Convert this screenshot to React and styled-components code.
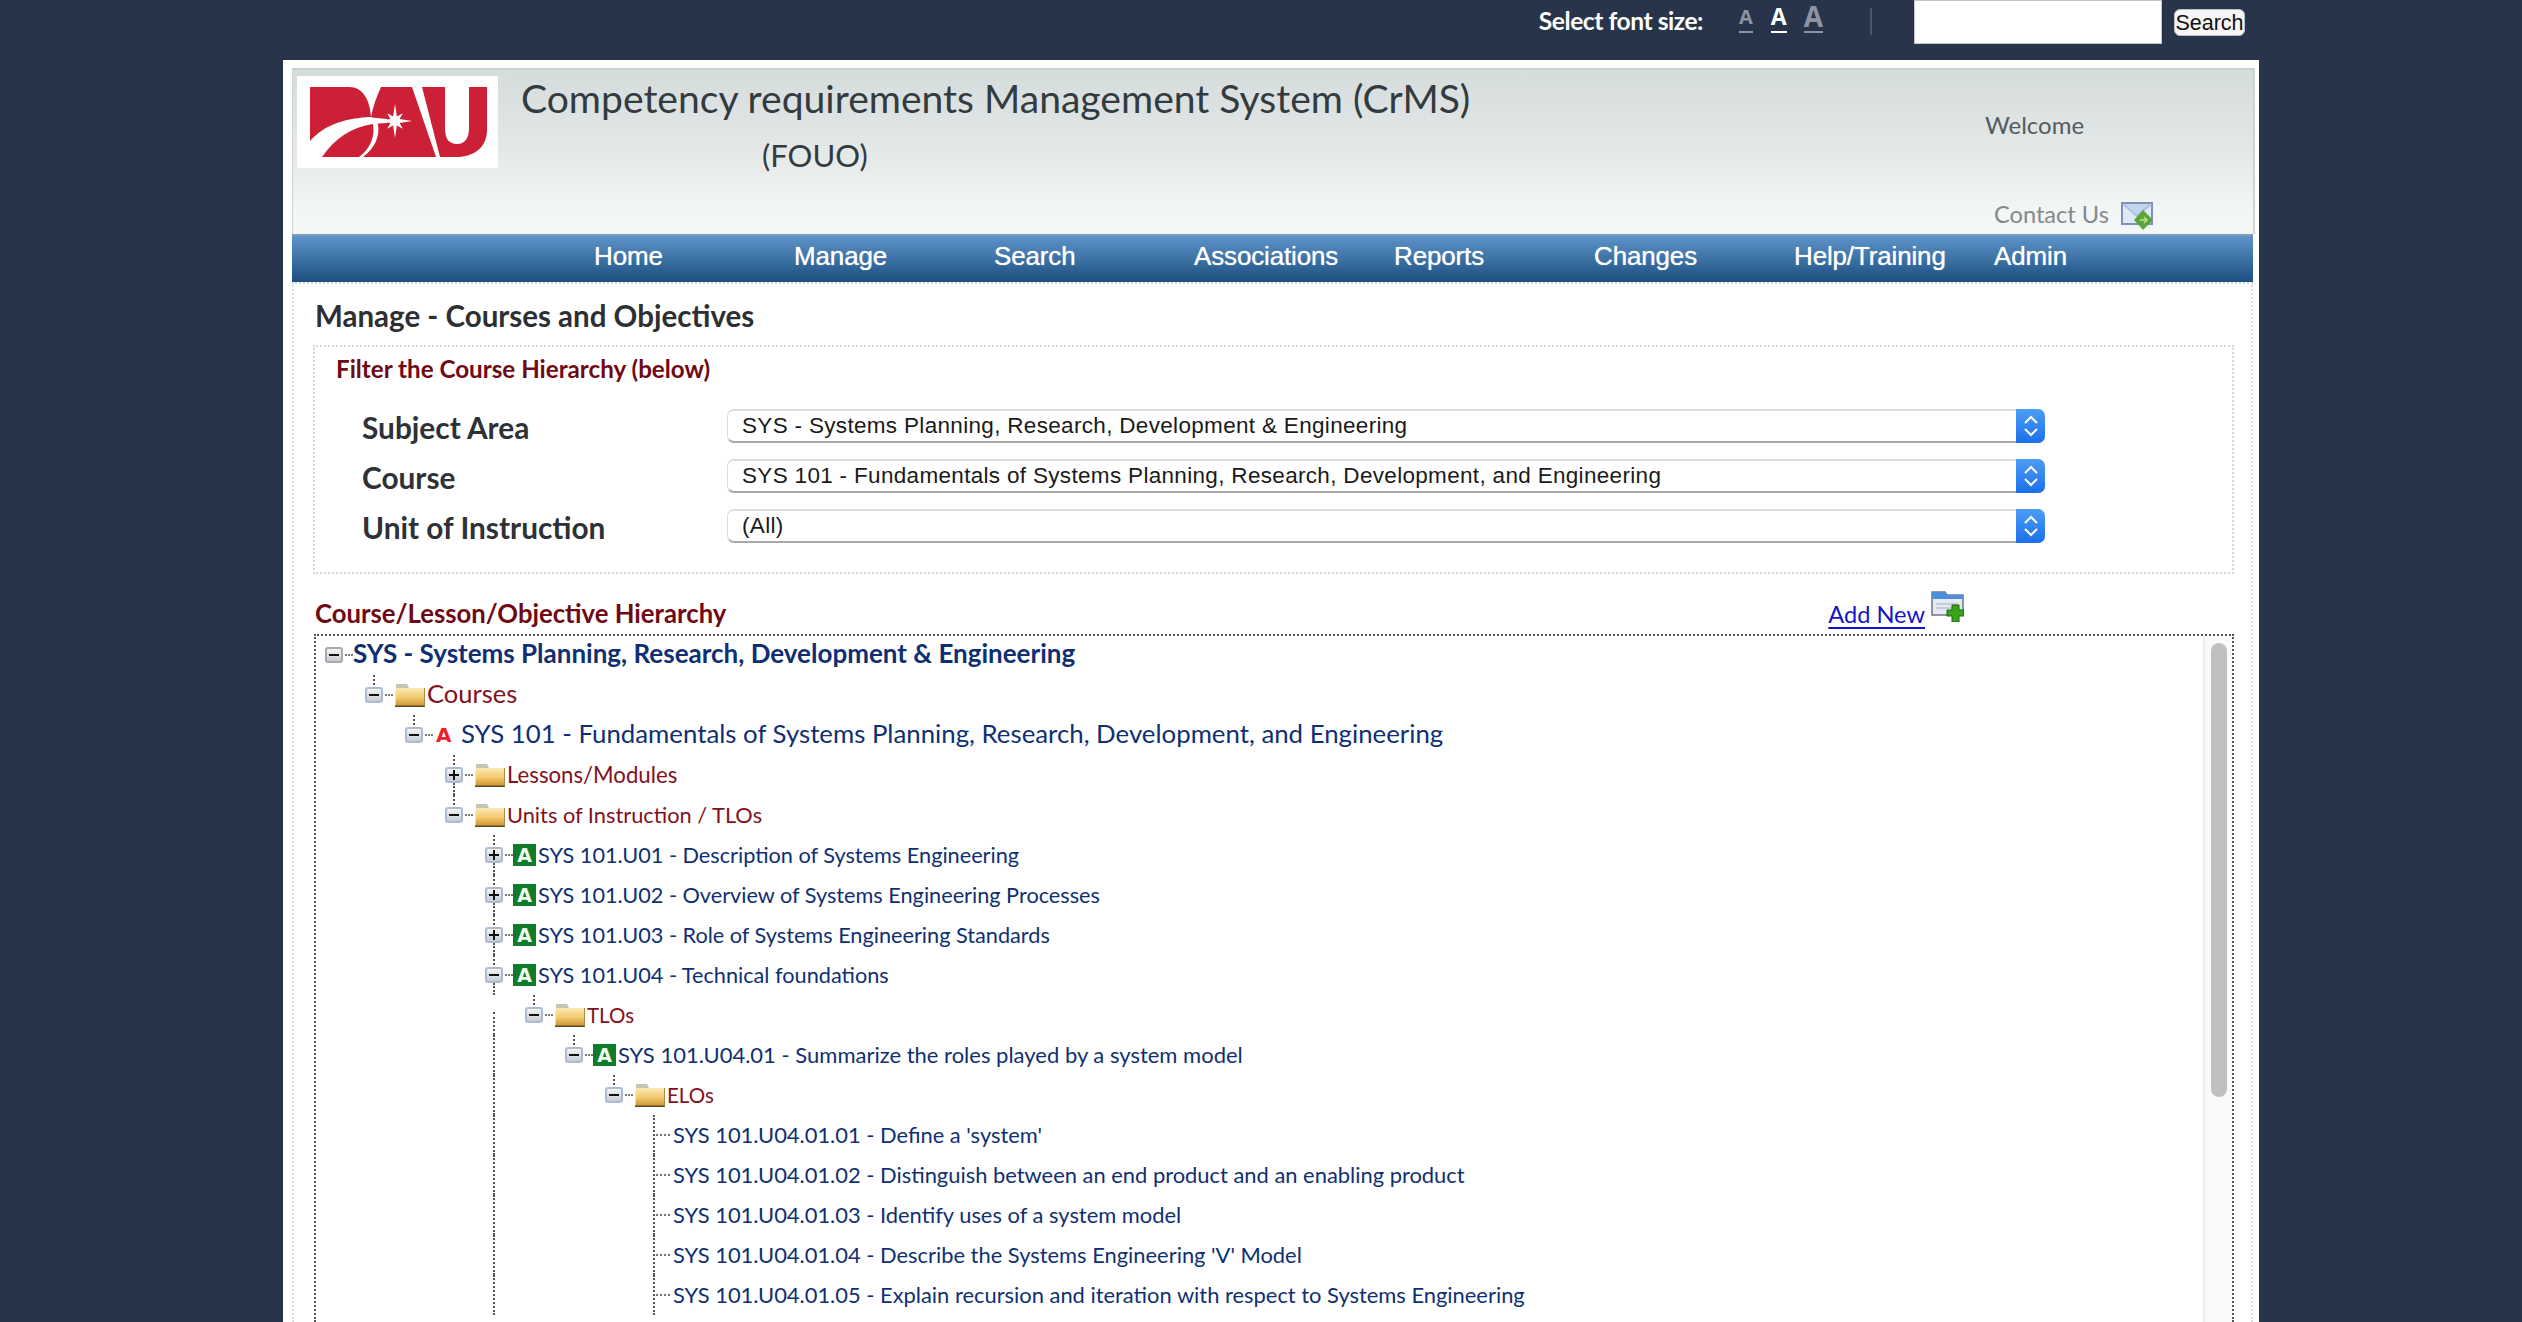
import React from 'react'
import styled, { createGlobalStyle } from 'styled-components'

const Global = createGlobalStyle`
  html, body { margin: 0; padding: 0; background: #28344a; }
  body { font-family: Lato, "Open Sans", sans-serif; }
  #root { height: 1322px; overflow: hidden; }
`

const Shell = styled.div`
  width: 2522px;
  height: 1322px;
  overflow: hidden;
  background: #28344a;
`

const TopBar = styled.div`
  height: 60px;
  display: flex;
  justify-content: flex-end;
  align-items: flex-start;
  padding-right: 277px;
  box-sizing: border-box;
`
const FontLabel = styled.span`
  color: #fff;
  font-size: 24.6px;
  font-weight: 700;
  line-height: 42px;
  margin-right: 36px;
  letter-spacing: -0.45px;
`
const SizeLink = styled.a`
  color: ${p => (p.$on ? '#fff' : '#8c94a4')};
  font-size: ${p => p.$size}px;
  font-weight: 700;
  height: 33px;
  margin-right: ${p => p.$gap}px;
  text-decoration: none;
  box-shadow: inset 0 -2px 0 ${p => (p.$on ? '#fff' : '#8c94a4')};
  display: flex;
  align-items: flex-end;
  font-family: "Open Sans", sans-serif;
  line-height: 33px;
`
const Divider = styled.span`
  width: 2px;
  height: 27px;
  margin: 8px 42px 0 47px;
  background: #4a556b;
`
const SearchInput = styled.input`
  width: 248px;
  height: 44px;
  box-sizing: border-box;
  border: 1px solid #c4c4c8;
  background: #fff;
  margin: 0 12px 0 0;
  padding: 0;
`
const SearchButton = styled.button`
  width: 71px;
  height: 27px;
  margin-top: 9px;
  padding: 0;
  border: 1px solid #b9bcc6;
  border-radius: 6px;
  background: #f6f6f6;
  color: #111;
  font-family: "Liberation Sans", sans-serif;
  font-size: 21.5px;
  line-height: 24px;
`

const Page = styled.div`
  width: 1976px;
  height: 1262px;
  margin-left: 283px;
  background: #fff;
  padding: 8px 4px 0 9px;
  box-sizing: border-box;
`
const Panel = styled.div`
  height: 100%;
  display: flex;
  flex-direction: column;
`
const Header = styled.header`
  height: 166px;
  flex: none;
  display: flex;
  align-items: flex-start;
  box-sizing: border-box;
  padding: 6px 0 0 4px;
  border-top: 2px solid #c9d1cf;
  border-left: 1px solid #cdd4d2;
  border-right: 2px solid #cdd4d2;
  background: linear-gradient(#d5dcdc, #e4e9e8 50%, #f2f6f5 85%);
`
const LogoBox = styled.div`
  width: 201px;
  height: 92px;
  flex: none;
  background: #fff;
  svg { display: block; }
`
const TitleBlock = styled.div`
  margin-left: 23px;
  color: #333b3f;
`
const Title = styled.h1`
  margin: -4px 0 0;
  font-size: 39.1px;
  font-weight: 400;
  line-height: 52px;
  white-space: nowrap;
`
const Fouo = styled.div`
  font-size: 31px;
  line-height: 44px;
  margin-top: 9px;
  padding-left: 241px;
`
const UserBlock = styled.div`
  margin-left: auto;
  width: 268px;
  flex: none;
  font-size: 24px;
  padding-top: 31px;
`
const Welcome = styled.div`
  color: #555b5e;
  line-height: 36px;
`
const ContactRow = styled.a`
  display: flex;
  align-items: center;
  color: #85898c;
  margin: 55px 0 0 9px;
  height: 32px;
  font-size: 23.6px;
  svg { margin: 2px 0 0 12px; }
`
const Nav = styled.nav`
  height: 48px;
  flex: none;
  box-sizing: border-box;
  display: grid;
  grid-template-columns: repeat(8, 200px);
  align-items: center;
  padding: 0 0 5px 302px;
  margin-right: 2px;
  border-top: 2px solid #7e9db8;
  background: linear-gradient(#5d93c8, #3f75a8 45%, #1c4e7e);
  color: #fff;
  font-family: "Liberation Sans", sans-serif;
  font-size: 26px;
  text-shadow: 0 0 1px rgba(255, 255, 255, 0.8);
`
const NavLink = styled.a`
  letter-spacing: -0.15px;
  white-space: nowrap;
`

const Body = styled.main`
  flex: 1;
  min-height: 0;
  display: flex;
  flex-direction: column;
  padding: 0 17px 0 19px;
  border-top: 2px dotted #c6d8e6;
  border-left: 2px dotted #dcdcdc;
  border-right: 2px dotted #dcdcdc;
  margin-right: 2px;
  box-sizing: border-box;
`
const PageHeading = styled.h2`
  margin: 13px 0 0 2px;
  color: #2e2f33;
  font-size: 29.5px;
  font-weight: 700;
  line-height: 38px;
  height: 48px;
`
const FilterBox = styled.section`
  height: 229px;
  flex: none;
  box-sizing: border-box;
  border: 2px dotted #d8d8d8;
  padding: 5px 0 0 21px;
`
const FilterTitle = styled.div`
  color: #6f0a14;
  font-size: 24.2px;
  font-weight: 700;
  line-height: 34px;
  margin-bottom: 23px;
`
const FilterRow = styled.div`
  display: flex;
  align-items: center;
  height: 34px;
  margin: 0 0 16px 26px;
`
const FilterLabel = styled.label`
  width: 365px;
  flex: none;
  margin-top: 2px;
  color: #2e3136;
  font-size: 29.8px;
  font-weight: 700;
`
const Select = styled.div`
  width: 1318px;
  height: 34px;
  display: flex;
  box-sizing: border-box;
  border-radius: 7px;
  border-top: 2px solid #dedede;
  border-left: 1px solid #dcdcdc;
  border-bottom: 2px solid #a9a9a9;
  background: #fff;
`
const SelectText = styled.span`
  flex: 1;
  padding-left: 14px;
  color: #1a1a1a;
  font-family: "Liberation Sans", sans-serif;
  font-size: 22.5px;
  line-height: 29px;
  letter-spacing: 0.32px;
  white-space: nowrap;
`
const SelectArrow = styled.span`
  width: 29px;
  height: 34px;
  margin: -2px 0;
  flex: none;
  display: flex;
  align-items: center;
  justify-content: center;
  border-radius: 0 7px 7px 0;
  background: linear-gradient(#4d9df6, #1b6fea);
`
const HierarchyBar = styled.div`
  height: 60px;
  flex: none;
  display: flex;
  align-items: flex-start;
  padding-top: 23px;
  box-sizing: border-box;
`
const HierarchyTitle = styled.h3`
  margin: 0 0 0 2px;
  color: #6f0a14;
  font-size: 25.7px;
  font-weight: 700;
  line-height: 32px;
`
const AddNew = styled.a`
  margin-left: auto;
  margin-right: 270px;
  margin-top: -6px;
  display: flex;
  align-items: flex-start;
  color: #1414c8;
  font-size: 23.6px;
  line-height: 30px;
  span {
    margin-top: 8px;
    text-decoration: underline;
    text-underline-offset: 4px;
  }
  svg { margin-left: 6px; }
`
const TreeFrame = styled.div`
  flex: 1;
  min-height: 0;
  display: flex;
  box-sizing: border-box;
  margin-left: 1px;
  border-top: 2px dotted #555;
  border-left: 2px dotted #555;
  border-right: 2px dotted #555;
`
const TreeBody = styled.div`
  flex: 1;
  min-width: 0;
  overflow: hidden;
  margin-top: -1px;
`
const Row = styled.div`
  position: relative;
  height: 40px;
  display: flex;
  align-items: center;
  padding-left: ${p => 9 + p.$depth * 40}px;
  white-space: nowrap;
`
const Leaf = styled(Row)`
  padding-left: ${p => 18 + p.$depth * 40}px;
`
const Guide = styled.i`
  position: absolute;
  top: ${p => p.$from || 0}px;
  bottom: 0;
  left: ${p => 17 + p.$depth * 40}px;
  border-left: 2px dotted #555;
`
const Expander = styled.span`
  position: relative;
  width: 18px;
  height: 16px;
  flex: none;
  box-sizing: border-box;
  display: flex;
  align-items: center;
  justify-content: center;
  border: 2px solid ${p => (p.$root ? '#a9a9ab' : '#aebcd2')};
  border-radius: 3px;
  background: linear-gradient(#f2f4f6, #c9ccd2);
  color: #111;
  &::before {
    content: ${p => (p.$root ? 'none' : '""')};
    position: absolute;
    left: 6px;
    top: -14px;
    height: 10px;
    border-left: 2px dotted #555;
  }
  &::after {
    content: ${p => (p.$linked ? '""' : 'none')};
    position: absolute;
    left: 6px;
    top: 14px;
    height: 12px;
    border-left: 2px dotted #555;
  }
`
const Mark = styled.b`
  position: relative;
  display: block;
  width: 10px;
  height: 2px;
  background: #111;
  &::after {
    content: ${p => (p.$plus ? '""' : 'none')};
    position: absolute;
    left: 4px;
    top: -4px;
    width: 2px;
    height: 10px;
    background: #111;
  }
`
const Dash = styled.span`
  width: ${p => p.$w || 8}px;
  flex: none;
  margin: 0 ${p => (p.$after === undefined ? 2 : p.$after)}px 0 2px;
  border-top: 2px dotted #777;
`
const GreenBadge = styled.span`
  width: 23px;
  height: 22px;
  flex: none;
  margin-right: 2px;
  display: flex;
  align-items: center;
  justify-content: center;
  background: #0e7c28;
  color: #eef7ea;
  font-family: "DejaVu Sans", sans-serif;
  font-size: 19px;
  font-weight: 700;
  line-height: 22px;
`
const RedBadge = styled.span`
  width: 18px;
  flex: none;
  margin: 0 7px 0 1px;
  color: #ef1f30;
  font-family: "DejaVu Sans", sans-serif;
  font-size: 20px;
  font-weight: 700;
`
const FolderWrap = styled.span`
  width: 30px;
  height: 24px;
  flex: none;
  margin-right: 2px;
  svg { display: block; }
`
const Label = styled.span`
  color: ${p => (p.$folder ? '#84101c' : '#0f2f72')};
  font-size: ${p => p.$size}px;
  font-weight: ${p => (p.$bold ? 700 : 400)};
  line-height: 40px;
  margin-bottom: ${p => (p.$size > 24 ? 4 : 0)}px;
`
const ScrollTrack = styled.div`
  width: 29px;
  flex: none;
  box-sizing: border-box;
  padding: 7px 5px 0 6px;
  background: #fafafa;
  border-left: 2px solid #ececec;
`
const ScrollThumb = styled.div`
  height: 454px;
  border-radius: 8px;
  background: #c0c0c0;
`

// star of the logo: long rays on the axes, short ones between them
const starPoints = Array.from({ length: 16 }, (_, i) => {
  const r = i % 2 ? 5 : i % 4 === 0 ? 17 : 11
  const a = (i * Math.PI) / 8
  return `${(98 + r * Math.sin(a)).toFixed(1)},${(45 - r * Math.cos(a)).toFixed(1)}`
}).join(' ')

const DauLogo = () => (
  <svg width="201" height="92" viewBox="0 0 201 92">
    <g fill="#cb2035">
      <path d="M13 11H52C66 11 73 24 74 41C50 42 28 48 13 65Z" />
      <path d="M25 81C38 62 55 51 76 48C78 60 74 72 62 81Z" />
      <path d="M84 11H115L139 81H66C78 72 83 60 81 48L74 41C76 30 80 20 84 11Z" />
      <path d="M125 11H148V52C148 63 152 68 160 68C168 68 172 62 172 52V11H190V54C190 72 176 81 160 81H143Z" />
    </g>
    <path d="M70 41L90 43V47L72 48Z" fill="#fff" />
    <polygon points={starPoints} fill="#fff" />
  </svg>
)

const MailIcon = () => (
  <svg width="33" height="29" viewBox="0 0 33 29">
    <rect x="1" y="2" width="30" height="21" fill="#dfe9f6" stroke="#7d92b8" strokeWidth="2" />
    <path d="M2 3L16 15L30 3" fill="#c3d6ef" stroke="#aebfda" strokeWidth="2" />
    <path d="M22 9L32 19L22 29L13 19Z" fill="#5da53a" />
    <path d="M19 19H25M23 16L26 19L23 22" fill="none" stroke="#b9e08f" strokeWidth="1.5" />
  </svg>
)

const AddIcon = () => (
  <svg width="33" height="31" viewBox="0 0 33 31">
    <path d="M1 1H14L16 4H32V24H1Z" fill="#e4e9f2" stroke="#6d7686" strokeWidth="1.5" />
    <path d="M1 1H14L16 4H32V8H1Z" fill="#4b8fdc" />
    <path d="M5 13H27M5 17H22" stroke="#c3cbd9" strokeWidth="2" />
    <path d="M21 14H28V19H33V25H28V31H21V25H16V19H21Z" fill="#39a31c" stroke="#1d6410" strokeWidth="1" />
  </svg>
)

const Chevrons = () => (
  <svg width="16" height="26" viewBox="0 0 16 26">
    <path d="M2 10L8 4L14 10M2 16L8 22L14 16" fill="none" stroke="#fff" strokeWidth="2" />
  </svg>
)

const Folder = () => (
  <FolderWrap>
    <svg width="30" height="24" viewBox="0 0 30 24">
      <defs>
        <linearGradient id="folderFill" x1="0" y1="0" x2="0" y2="1">
          <stop offset="0" stopColor="#fbe9b4" />
          <stop offset="0.55" stopColor="#f1c86c" />
          <stop offset="1" stopColor="#cf9230" />
        </linearGradient>
      </defs>
      <path d="M1 1H12L14 5H1Z" fill="#c9c5b4" />
      <rect x="0.5" y="5" width="29" height="18" fill="url(#folderFill)" />
      <path d="M0 22.5H30V24H0Z" fill="#5a4a28" />
      <path d="M29 5H30V23H29Z" fill="#a98a4c" />
    </svg>
  </FolderWrap>
)

const Toggle = ({ plus, linked, root }) => (
  <Expander $linked={linked} $root={root}>
    <Mark $plus={plus} />
  </Expander>
)

const subjectAreas = [
  ['Subject Area', 'SYS - Systems Planning, Research, Development & Engineering'],
  ['Course', 'SYS 101 - Fundamentals of Systems Planning, Research, Development, and Engineering'],
  ['Unit of Instruction', '(All)'],
]
const navItems = ['Home', 'Manage', 'Search', 'Associations', 'Reports', 'Changes', 'Help/Training', 'Admin']

const units = [
  { label: 'SYS 101.U01 - Description of Systems Engineering', plus: true },
  { label: 'SYS 101.U02 - Overview of Systems Engineering Processes', plus: true },
  { label: 'SYS 101.U03 - Role of Systems Engineering Standards', plus: true },
  { label: 'SYS 101.U04 - Technical foundations' },
]
const elos = [
  "SYS 101.U04.01.01 - Define a 'system'",
  'SYS 101.U04.01.02 - Distinguish between an end product and an enabling product',
  'SYS 101.U04.01.03 - Identify uses of a system model',
  "SYS 101.U04.01.04 - Describe the Systems Engineering 'V' Model",
  'SYS 101.U04.01.05 - Explain recursion and iteration with respect to Systems Engineering',
]

const App = () => (
  <Shell>
    <Global />
    <TopBar>
      <FontLabel>Select font size:</FontLabel>
      <SizeLink $size={20} $gap={18}>A</SizeLink>
      <SizeLink $size={23} $gap={17} $on>A</SizeLink>
      <SizeLink $size={28}>A</SizeLink>
      <Divider />
      <SearchInput />
      <SearchButton>Search</SearchButton>
    </TopBar>
    <Page>
      <Panel>
        <Header>
          <LogoBox><DauLogo /></LogoBox>
          <TitleBlock>
            <Title>Competency requirements Management System (CrMS)</Title>
            <Fouo>(FOUO)</Fouo>
          </TitleBlock>
          <UserBlock>
            <Welcome>Welcome</Welcome>
            <ContactRow>Contact Us<MailIcon /></ContactRow>
          </UserBlock>
        </Header>
        <Nav>
          {navItems.map(n => <NavLink key={n}>{n}</NavLink>)}
        </Nav>
        <Body>
          <PageHeading>Manage - Courses and Objectives</PageHeading>
          <FilterBox>
            <FilterTitle>Filter the Course Hierarchy (below)</FilterTitle>
            {subjectAreas.map(([label, value]) => (
              <FilterRow key={label}>
                <FilterLabel>{label}</FilterLabel>
                <Select>
                  <SelectText>{value}</SelectText>
                  <SelectArrow><Chevrons /></SelectArrow>
                </Select>
              </FilterRow>
            ))}
          </FilterBox>
          <HierarchyBar>
            <HierarchyTitle>Course/Lesson/Objective Hierarchy</HierarchyTitle>
            <AddNew><span>Add New</span><AddIcon /></AddNew>
          </HierarchyBar>
          <TreeFrame>
            <TreeBody>
              <Row $depth={0}>
                <Toggle root />
                <Dash $after={0} />
                <Label $bold $size={26}>SYS - Systems Planning, Research, Development &amp; Engineering</Label>
              </Row>
              <Row $depth={1}>
                <Toggle />
                <Dash />
                <Folder />
                <Label $folder $size={25.5}>Courses</Label>
              </Row>
              <Row $depth={2}>
                <Toggle />
                <Dash />
                <RedBadge>A</RedBadge>
                <Label $size={25.8}>SYS 101 - Fundamentals of Systems Planning, Research, Development, and Engineering</Label>
              </Row>
              <Row $depth={3}>
                <Toggle plus linked />
                <Dash />
                <Folder />
                <Label $folder $size={22.2}>Lessons/Modules</Label>
              </Row>
              <Row $depth={3}>
                <Toggle />
                <Dash />
                <Folder />
                <Label $folder $size={21.8}>Units of Instruction / TLOs</Label>
              </Row>
              {units.map(u => (
                <Row $depth={4} key={u.label}>
                  <Toggle plus={u.plus} linked />
                  <Dash $after={0} />
                  <GreenBadge>A</GreenBadge>
                  <Label $size={21.7}>{u.label}</Label>
                </Row>
              ))}
              <Row $depth={5}>
                <Guide $depth={4} $from={17} />
                <Toggle />
                <Dash />
                <Folder />
                <Label $folder $size={20.5}>TLOs</Label>
              </Row>
              <Row $depth={6}>
                <Guide $depth={4} />
                <Toggle />
                <Dash $after={0} />
                <GreenBadge>A</GreenBadge>
                <Label $size={22}>SYS 101.U04.01 - Summarize the roles played by a system model</Label>
              </Row>
              <Row $depth={7}>
                <Guide $depth={4} />
                <Toggle />
                <Dash />
                <Folder />
                <Label $folder $size={20.5}>ELOs</Label>
              </Row>
              {elos.map(e => (
                <Leaf $depth={8} key={e}>
                  <Guide $depth={4} />
                  <Guide $depth={8} />
                  <Dash $w={14} $after={3} />
                  <Label $size={21.9}>{e}</Label>
                </Leaf>
              ))}
            </TreeBody>
            <ScrollTrack><ScrollThumb /></ScrollTrack>
          </TreeFrame>
        </Body>
      </Panel>
    </Page>
  </Shell>
)

export default App
